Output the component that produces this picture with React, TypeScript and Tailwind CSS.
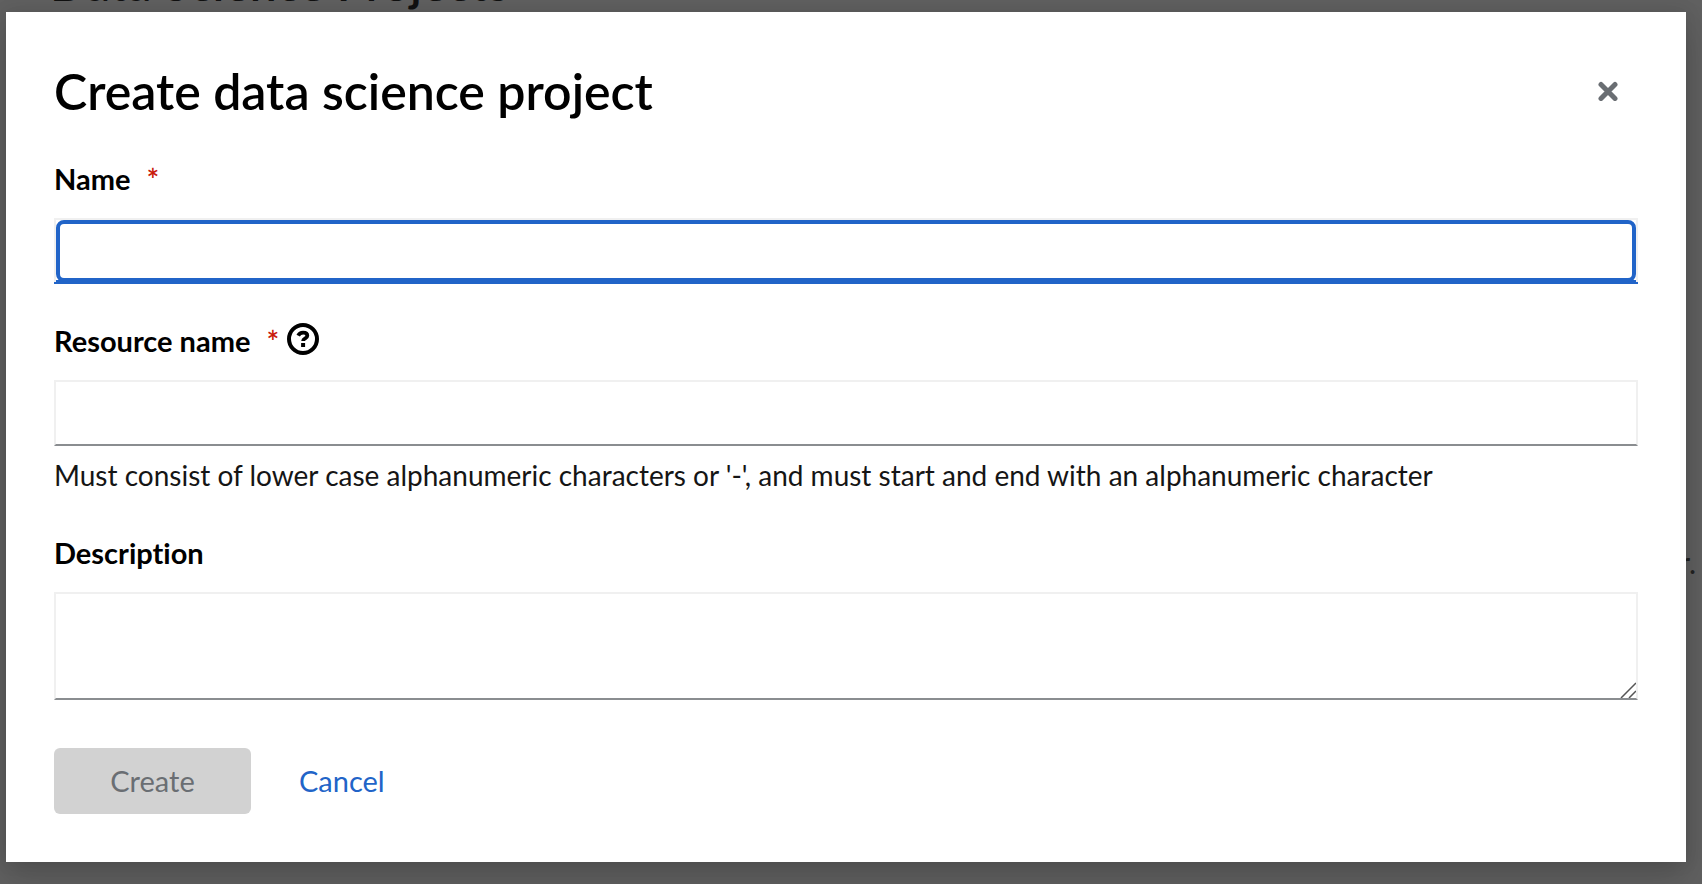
import React from "react";

const labelClass = "text-[29px] leading-[42px] font-bold text-black";
const fieldClass =
  "block w-full border-2 border-[#f0f0f0] border-b-[#8a8d90] bg-white px-4 text-[28px] text-[#151515] outline-none";

function Required() {
  return (
    <span aria-hidden="true" className="ml-4 text-[30px] leading-[42px] font-semibold text-[#c9190b]">
      *
    </span>
  );
}

export default function App() {
  return (
    <div className="relative min-h-screen overflow-hidden bg-[#606060] pt-3 pr-4 pb-5 pl-1.5 font-['Lato',sans-serif] [font-variant-ligatures:none]">
      <div aria-hidden="true" className="absolute inset-0 overflow-hidden">
        <p className="absolute -top-[46px] left-[50px] text-[48px] leading-[58px] font-semibold whitespace-nowrap text-[#111111]">
          Data Science Projects
        </p>
        <p className="absolute top-[544px] right-[6px] text-[30px] leading-[36px] text-[#222222]">r.</p>
      </div>

      <div
        role="dialog"
        aria-modal="true"
        aria-labelledby="dialog-title"
        className="relative bg-white p-12 shadow-[0_16px_32px_rgba(3,3,3,0.16),0_0_16px_rgba(3,3,3,0.1)]"
      >
        <header className="flex items-center justify-between pr-1.5">
          <h1 id="dialog-title" className="text-[50px] leading-[62px] font-semibold text-black">
            Create data science project
          </h1>
          <button type="button" aria-label="Close" className="flex size-12 items-center justify-center text-[#6a6e73]">
            <svg viewBox="0 0 20 20" className="size-5" fill="none" stroke="currentColor" strokeWidth="5" strokeLinecap="round">
              <path d="M3 3.500l14 14M17 3.500L3 17.500" />
            </svg>
          </button>
        </header>

        <form className="pt-9">
          <div>
            <div className="flex items-center">
              <label htmlFor="name" className={labelClass}>
                Name
              </label>
              <Required />
            </div>
            <div className="mt-[18px] border-b-4 border-[#2164c8]">
              <div className="border-x-2 border-t-2 border-[#f0f0f0]">
                <input
                  id="name"
                  type="text"
                  required
                  className="relative -mb-0.5 block h-[62px] w-full rounded-[8px] border-4 border-[#2164c8] bg-white px-3 text-[28px] text-[#151515] outline-none"
                />
              </div>
            </div>
          </div>

          <div className="mt-9">
            <div className="flex items-center">
              <label htmlFor="resource-name" className={labelClass}>
                Resource name
              </label>
              <Required />
              <button type="button" aria-label="More info for resource name" className="mb-1 ml-2">
                <svg viewBox="0 0 32 32" className="size-8" fill="none" stroke="#000000">
                  <circle cx="16" cy="16" r="14" strokeWidth="4" />
                  <path d="M11.200 12.600c1-2 2.600-2.900 4.900-2.900 2.500 0 4.200 1.200 4.200 3.100 0 2.700-4.200 2.500-4.200 5.200" strokeWidth="3.800" />
                  <path d="M14.100 20h4v4h-4z" fill="#000000" stroke="none" />
                </svg>
              </button>
            </div>
            <input
              id="resource-name"
              type="text"
              required
              aria-describedby="resource-help"
              className={`${fieldClass} mt-[18px] h-[66px]`}
            />
            <p id="resource-help" className="mt-2 text-[28px] leading-[42px] text-[#151515]">
              Must consist of lower case alphanumeric characters or '-', and must start and end with an alphanumeric
              character
            </p>
          </div>

          <div className="mt-9">
            <label htmlFor="description" className={`${labelClass} block`}>
              Description
            </label>
            <div className="relative mt-[18px]">
              <textarea id="description" className={`${fieldClass} h-[108px] resize-y`} />
              <svg
                aria-hidden="true"
                viewBox="0 0 16 16"
                className="pointer-events-none absolute right-0.5 bottom-0.5 size-4 bg-white"
                fill="none"
                stroke="#555555"
                strokeWidth="1.500"
              >
                <path d="M1 16L16 1M9 16l7-7" />
              </svg>
            </div>
          </div>

          <div className="mt-12 flex">
            <button
              type="submit"
              disabled
              className="h-[66px] w-[197px] rounded-[6px] bg-[#d2d2d2] text-[29px] text-[#6a6e73]"
            >
              Create
            </button>
            <button type="button" className="ml-4 h-[66px] px-8 text-[29px] text-[#2164c8]">
              Cancel
            </button>
          </div>
        </form>
      </div>
    </div>
  );
}
